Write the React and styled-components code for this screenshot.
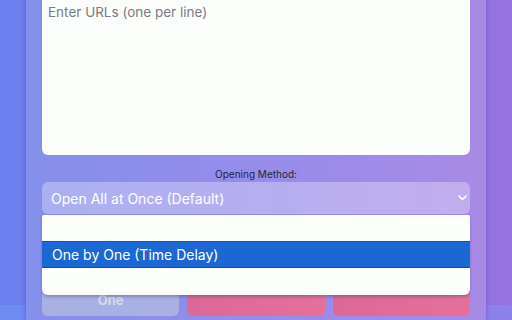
import React from "react";
import styled, { createGlobalStyle } from "styled-components";

const Global = createGlobalStyle`
  html, body { margin: 0; padding: 0; }
  body {
    width: 512px;
    height: 320px;
    overflow: hidden;
    font-family: "Inter", "Noto Sans", sans-serif;
    background:
      linear-gradient(to bottom, transparent 305px, rgba(120, 170, 255, 0.28) 305px),
      linear-gradient(90deg, #6a80ee 0%, #8478e6 60%, #9572e0 100%);
  }
`;

const Page = styled.div`
  display: flex;
  justify-content: center;
  height: 320px;
`;

const Panel = styled.div`
  width: 460px;
  margin-top: -12px;
  padding: 0 16px;
  box-sizing: border-box;
  display: flex;
  flex-direction: column;
  background: linear-gradient(90deg, #858fec 0%, #988cea 55%, #a88ae6 100%);
  box-shadow: -2px 0 3px rgba(70, 80, 190, 0.35), 2px 0 3px rgba(110, 80, 190, 0.3);
`;

const UrlBox = styled.textarea`
  height: 167px;
  resize: none;
  border: none;
  outline: none;
  border-radius: 6px;
  background: #fcfefc;
  padding: 16px 6px;
  box-sizing: border-box;
  font-family: "Inter", "Noto Sans", sans-serif;
  font-size: 13.5px;
  color: #333;
  &::placeholder { color: #7b7b82; }
`;

const Label = styled.div`
  margin-top: 13px;
  text-align: center;
  font-size: 10px;
  color: #24243c;
  line-height: 12px;
`;

const SelectWrap = styled.div`
  position: relative;
  margin-top: 2px;
`;

const SelectBox = styled.div`
  height: 32px;
  border-radius: 6px;
  background: rgba(255, 255, 255, 0.3);
  display: flex;
  align-items: center;
  justify-content: space-between;
  padding: 0 3px 0 9px;
  font-size: 14px;
  color: #fff;
`;

const Menu = styled.div`
  position: absolute;
  top: 33px;
  left: 0;
  right: 0;
  background: #fcfefc;
  border-radius: 2px 2px 6px 6px;
  box-shadow: 0 2px 3px rgba(60, 60, 90, 0.35);
  overflow: hidden;
  z-index: 5;
`;

const Option = styled.div`
  height: ${p => (p.$first ? 26 : 27)}px;
  box-sizing: border-box;
  display: flex;
  align-items: center;
  padding: 0 10px;
  font-size: 14px;
  color: ${p => (p.$selected ? "#fff" : "#fcfefc")};
  background: ${p => (p.$selected ? "#1b67d3" : "transparent")};
  border-top: 1px solid ${p => (p.$selected ? "#1055c4" : "transparent")};
  border-bottom: 1px solid ${p => (p.$selected ? "#0d4db8" : "transparent")};
`;

const Buttons = styled.div`
  margin-top: 56px;
  display: grid;
  grid-template-columns: repeat(3, 1fr);
  gap: 8px;
`;

const Btn = styled.div`
  height: 46px;
  border-radius: 6px;
  display: flex;
  align-items: flex-end;
  justify-content: center;
  padding-bottom: 8px;
  box-sizing: border-box;
  text-align: center;
  font-weight: 700;
  font-size: 13px;
  line-height: 16px;
  color: ${p => (p.$disabled ? "#d8dbee" : "#fff")};
  background: ${p =>
    p.$disabled
      ? "#a9b0e3"
      : "linear-gradient(90deg, #dc6899, #e6709b)"};
`;

const Chevron = () => (
  <svg width="9" height="6" viewBox="0 0 9 6">
    <polyline points="1,1 4.5,4.5 8,1" fill="none" stroke="#fff" strokeWidth="1.6" strokeLinecap="round" strokeLinejoin="round" />
  </svg>
);

export default function App() {
  return (
    <>
      <Global />
      <Page>
        <Panel>
          <UrlBox placeholder="Enter URLs (one per line)" />
          <Label>Opening Method:</Label>
          <SelectWrap>
            <SelectBox>
              <span>Open All at Once (Default)</span>
              <Chevron />
            </SelectBox>
            <Menu>
              <Option $first>Open All at Once (Default)</Option>
              <Option $selected>One by One (Time Delay)</Option>
              <Option>Open in New Window</Option>
            </Menu>
          </SelectWrap>
          <Buttons>
            <Btn $disabled>Open Next<br />One</Btn>
            <Btn>Open URLs<br />&nbsp;</Btn>
            <Btn>Copy Input<br />&nbsp;</Btn>
          </Buttons>
        </Panel>
      </Page>
    </>
  );
}
